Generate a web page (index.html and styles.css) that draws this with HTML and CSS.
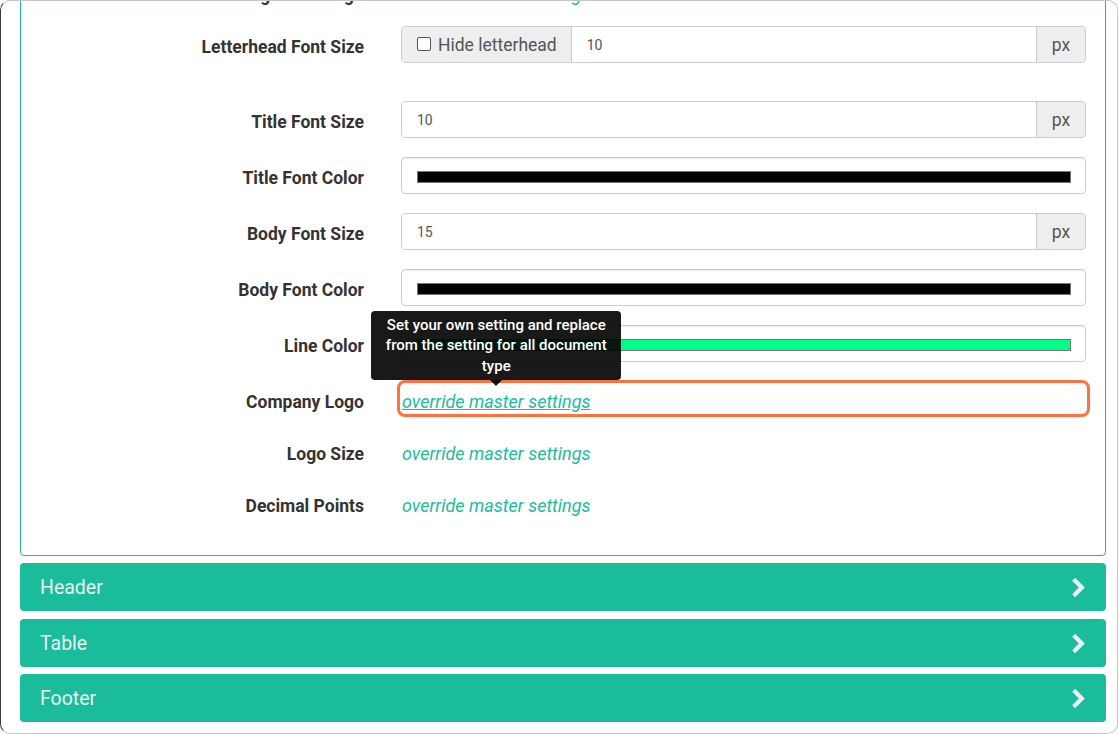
FILE: index.html
```html
<!DOCTYPE html>
<html>
<head>
<meta charset="utf-8">
<title>Document Settings</title>
<link rel="stylesheet" href="styles.css">
</head>
<body>
<div class="frame">
  <div class="panel">
    <div class="row link-row">
      <div class="lbl">Alignment Logo</div>
      <div class="val"><a class="ovr">override master settings</a></div>
    </div>

    <div class="row input-row wide-gap">
      <div class="lbl">Letterhead Font Size</div>
      <div class="val">
        <div class="igroup">
          <span class="addon first"><span class="cb"></span>Hide letterhead</span>
          <span class="field">10</span>
          <span class="addon last">px</span>
        </div>
      </div>
    </div>

    <div class="row input-row">
      <div class="lbl">Title Font Size</div>
      <div class="val">
        <div class="igroup">
          <span class="field">10</span>
          <span class="addon last">px</span>
        </div>
      </div>
    </div>

    <div class="row input-row">
      <div class="lbl">Title Font Color</div>
      <div class="val"><div class="color"><div class="swatch black"></div></div></div>
    </div>

    <div class="row input-row">
      <div class="lbl">Body Font Size</div>
      <div class="val">
        <div class="igroup">
          <span class="field">15</span>
          <span class="addon last">px</span>
        </div>
      </div>
    </div>

    <div class="row input-row">
      <div class="lbl">Body Font Color</div>
      <div class="val"><div class="color"><div class="swatch black"></div></div></div>
    </div>

    <div class="row input-row">
      <div class="lbl">Line Color</div>
      <div class="val"><div class="color"><div class="swatch green"></div></div></div>
    </div>

    <div class="row link-row">
      <div class="lbl">Company Logo</div>
      <div class="val hl-cell">
        <span class="hl"></span>
        <span class="tip-anchor">
          <a class="ovr active">override master settings</a>
          <span class="tooltip">Set your own setting and replace<br>from the setting for all document<br>type<span class="arrow"></span></span>
        </span>
      </div>
    </div>

    <div class="row link-row">
      <div class="lbl">Logo Size</div>
      <div class="val"><a class="ovr">override master settings</a></div>
    </div>

    <div class="row link-row">
      <div class="lbl">Decimal Points</div>
      <div class="val"><a class="ovr">override master settings</a></div>
    </div>
  </div>

  <div class="acc"><span>Header</span><svg class="chev" viewBox="346 26 1036 1612"><path d="M1363 877l-742 742q-19 19-45 19t-45-19l-166-166q-19-19-19-45t19-45l531-531-531-531q-19-19-19-45t19-45l166-166q19-19 45-19t45 19l742 742q19 19 19 45t-19 45z"/></svg></div>
  <div class="acc mid"><span>Table</span><svg class="chev" viewBox="346 26 1036 1612"><path d="M1363 877l-742 742q-19 19-45 19t-45-19l-166-166q-19-19-19-45t19-45l531-531-531-531q-19-19-19-45t19-45l166-166q19-19 45-19t45 19l742 742q19 19 19 45t-19 45z"/></svg></div>
  <div class="acc"><span>Footer</span><svg class="chev" viewBox="346 26 1036 1612"><path d="M1363 877l-742 742q-19 19-45 19t-45-19l-166-166q-19-19-19-45t19-45l531-531-531-531q-19-19-19-45t19-45l166-166q19-19 45-19t45 19l742 742q19 19 19 45t-19 45z"/></svg></div>
</div>
</body>
</html>
```

FILE: styles.css
```css
* { box-sizing: border-box; }
html, body { margin: 0; padding: 0; }
body {
  font-family: Roboto, "Noto Sans", "Liberation Sans", Arial, sans-serif;
  background: #fff;
  overflow: hidden;
}

.frame {
  width: 1118px;
  height: 734px;
  border: 1px solid #c3c6cb;
  border-left-color: #3a3a3a;
  border-radius: 10px;
  overflow: hidden;
  background: #fff;
  padding: 0 11px 0 19px;
}

.panel {
  margin-top: -48px;
  border: 1px solid #1abc9c;
  border-radius: 4px;
  padding: 20px 19px 18px 0;
}

.row {
  display: grid;
  grid-template-columns: 343px 1fr;
  column-gap: 37px;
  margin-bottom: 19px;
}

.lbl {
  text-align: right;
  font-weight: 700;
  font-size: 17.5px;
  color: #333;
}

.input-row { height: 37px; }
.input-row .lbl { align-self: center; padding-top: 4px; }
.wide-gap { margin-bottom: 38px; }

.link-row { height: 37px; margin-bottom: 15px; }
.link-row .lbl, .link-row .val { padding-top: 9px; line-height: 24px; }
.link-row .val { padding-left: 1px; }

.ovr {
  color: #1abc9c;
  font-style: italic;
  font-size: 18px;
  text-decoration: none;
}
.ovr.active { text-decoration: underline; }

.igroup {
  display: flex;
  height: 37px;
  border: 1px solid #ccc;
  border-radius: 4px;
  overflow: hidden;
  box-shadow: inset 0 1px 1px rgba(0,0,0,.075);
}
.addon {
  background: #eee;
  color: #555;
  font-size: 17.5px;
  display: flex;
  align-items: center;
  padding: 0 15px;
}
.addon.first { border-right: 1px solid #ccc; padding-right: 14px; }
.addon.last { border-left: 1px solid #ccc; width: 49px; justify-content: center; padding: 0; }
.cb {
  width: 14px;
  height: 14px;
  border: 1px solid #555;
  border-radius: 2px;
  background: #fff;
  margin-right: 7px;
  margin-top: -2px;
}
.field {
  flex: 1;
  font-size: 14px;
  color: #555;
  padding-left: 15px;
  display: flex;
  align-items: center;
  background: #fff;
}

.color {
  height: 37px;
  border: 1px solid #ccc;
  border-radius: 4px;
  padding: 13px 14px 10px 15px;
  box-shadow: inset 0 1px 1px rgba(0,0,0,.075);
}
.swatch { height: 12px; border: 1px solid #777; }
.swatch.black { background: #000; }
.swatch.green { background: #00ff87; }

.hl-cell { position: relative; }
.hl {
  position: absolute;
  top: -1px;
  bottom: 1px;
  left: -4px;
  right: -4px;
  border: 3px solid #ff7043;
  border-radius: 8px;
}
.tip-anchor { position: relative; display: inline-block; }
.tooltip {
  position: absolute;
  bottom: calc(100% + 10px);
  left: 50%;
  transform: translateX(-50%);
  width: 250px;
  background: rgba(0,0,0,0.9);
  color: #fff;
  font-size: 15px;
  font-weight: 500;
  line-height: 20.5px;
  text-align: center;
  padding: 4px 6px 4px;
  border-radius: 4px;
  z-index: 5;
  font-style: normal;
}
.arrow {
  position: absolute;
  top: 100%;
  left: 50%;
  margin-left: -6px;
  width: 0;
  height: 0;
  border-left: 6px solid transparent;
  border-right: 6px solid transparent;
  border-top: 6px solid rgba(0,0,0,0.9);
}

.acc {
  height: 48px;
  margin-top: 7px;
  background: #1abc9c;
  border-radius: 4px;
  display: flex;
  align-items: center;
  justify-content: space-between;
  padding: 0 20px;
  color: #ecf0f1;
  font-size: 19.5px;
}
.acc.mid { margin-top: 8px; }
.chev { width: 13px; height: 19px; fill: #ecf0f1; margin-right: 1px; }
```
